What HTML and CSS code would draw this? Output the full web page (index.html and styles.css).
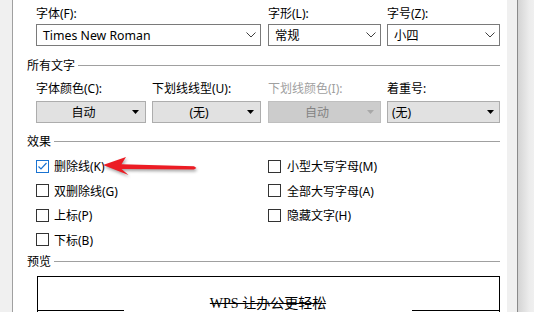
FILE: index.html
```html
<!DOCTYPE html>
<html lang="zh-CN">
<head>
<meta charset="utf-8">
<title>字体</title>
<link rel="stylesheet" href="styles.css">
</head>
<body>
<div class="frame">
  <div class="edge-left"></div>
  <main class="panel">
    <div class="row row-fields">
      <div class="field f225 gap7">
        <div class="label">字体(F):</div>
        <div class="select"><span>Times New Roman</span><svg class="chev" width="10" height="6" viewBox="0 0 10 6"><polyline points="0.5,0.5 5,5 9.5,0.5" fill="none" stroke="#404040" stroke-width="1"/></svg></div>
      </div>
      <div class="field f113 gap6">
        <div class="label">字形(L):</div>
        <div class="select"><span>常规</span><svg class="chev" width="10" height="6" viewBox="0 0 10 6"><polyline points="0.5,0.5 5,5 9.5,0.5" fill="none" stroke="#404040" stroke-width="1"/></svg></div>
      </div>
      <div class="field f113">
        <div class="label">字号(Z):</div>
        <div class="select"><span>小四</span><svg class="chev" width="10" height="6" viewBox="0 0 10 6"><polyline points="0.5,0.5 5,5 9.5,0.5" fill="none" stroke="#404040" stroke-width="1"/></svg></div>
      </div>
    </div>

    <div class="section sec-all"><span>所有文字</span><i class="rule"></i></div>

    <div class="row row-buttons">
      <div class="field f110 gap6">
        <div class="label">字体颜色(C):</div>
        <div class="dd center"><span class="dd-text">自动</span><svg class="tri" width="7" height="4" viewBox="0 0 7 4"><polygon points="0,0 7,0 3.5,4" fill="#000"/></svg></div>
      </div>
      <div class="field f109 gap7">
        <div class="label">下划线线型(U):</div>
        <div class="dd center"><span class="dd-text">(无)</span><svg class="tri" width="7" height="4" viewBox="0 0 7 4"><polygon points="0,0 7,0 3.5,4" fill="#000"/></svg></div>
      </div>
      <div class="field f113 gap6">
        <div class="label disabled">下划线颜色(I):</div>
        <div class="dd center off"><span class="dd-text">自动</span><svg class="tri" width="7" height="4" viewBox="0 0 7 4"><polygon points="0,0 7,0 3.5,4" fill="#a8a8a8"/></svg></div>
      </div>
      <div class="field f113">
        <div class="label">着重号:</div>
        <div class="dd left"><span class="dd-text">(无)</span><svg class="tri" width="7" height="4" viewBox="0 0 7 4"><polygon points="0,0 7,0 3.5,4" fill="#000"/></svg></div>
      </div>
    </div>

    <div class="section sec-effect"><span>效果</span><i class="rule"></i></div>

    <div class="checks">
      <label class="check"><span class="box checked"><svg width="11" height="11" viewBox="0 0 11 11"><polyline points="1.5,5.5 4,8 9.5,2" fill="none" stroke="#1a73d1" stroke-width="1.2"/></svg></span><span>删除线(K)</span></label>
      <label class="check"><span class="box"></span><span>双删除线(G)</span></label>
      <label class="check"><span class="box"></span><span>上标(P)</span></label>
      <label class="check"><span class="box"></span><span>下标(B)</span></label>
      <label class="check right"><span class="box"></span><span>小型大写字母(M)</span></label>
      <label class="check right"><span class="box"></span><span>全部大写字母(A)</span></label>
      <label class="check right"><span class="box"></span><span>隐藏文字(H)</span></label>
    </div>

    <div class="section sec-preview"><span>预览</span><i class="rule"></i></div>

    <div class="preview">
      <div class="baseline">
        <i class="bl-left"></i>
        <div class="sample"><span class="strike">WPS 让办公更轻松</span></div>
        <i class="bl-right"></i>
      </div>
    </div>
  </main>
  <div class="edge-right"></div>
  <div class="edge-line"></div>
  <div class="shadow"></div>

  <svg class="arrow" width="100" height="26" viewBox="0 0 100 26">
    <polygon points="3,11 26,3 21.5,10.2 94,12.3 96.4,13.9 94,15.6 21.5,15 28.5,21" fill="#ec1c24"/>
  </svg>
</div>
</body>
</html>
```

FILE: styles.css
```css
* { box-sizing: border-box; }

html, body {
  margin: 0;
  padding: 0;
  width: 534px;
  height: 312px;
  overflow: hidden;
  background: #f0f0f0;
  font-family: "Noto Sans", "Noto Sans CJK SC", sans-serif;
  font-size: 12px;
  color: #000;
}

.frame {
  position: relative;
  display: flex;
  width: 534px;
  height: 312px;
}

.edge-left {
  width: 13px;
  flex: 0 0 13px;
  background: #f0f0f0;
  border-right: 1px solid #a0a0a0;
}

.panel {
  flex: 0 0 494px;
  width: 494px;
  height: 312px;
  background: #fff;
  padding: 0 7px 0 14px;
  overflow: hidden;
}

.edge-right {
  flex: 0 0 10px;
  background: #f0f0f0;
}

.edge-line {
  flex: 0 0 1px;
  background: #8a8a8a;
}

.shadow {
  flex: 1 1 auto;
  background: linear-gradient(to right, #d4d4d4, #ececec 70%, #f0f0f0);
}

/* rows of fields */
.row {
  display: flex;
  margin-left: 9px;
}

.row-fields { margin-top: 6px; }
.row-buttons { margin-top: 7px; }

.field { display: flex; flex-direction: column; }
.f225 { width: 225px; }
.f113 { width: 113px; }
.f110 { width: 110px; }
.f109 { width: 109px; }
.gap6 { margin-right: 6px; }
.gap7 { margin-right: 7px; }

.label {
  height: 16px;
  line-height: 16px;
  white-space: nowrap;
}
.label.disabled { color: #a0a0a0; }

.select {
  margin-top: 2px;
  height: 22px;
  border: 1px solid #7a7a7a;
  background: #fff;
  display: flex;
  align-items: center;
  padding: 0 4px 0 6px;
  font-size: 12.3px;
}
.select span { flex: 1 1 auto; white-space: nowrap; }
.chev { flex: 0 0 auto; display: block; }

.dd {
  margin-top: 4px;
  height: 22px;
  border: 1px solid #adadad;
  background: #e1e1e1;
  display: flex;
  align-items: center;
  padding: 0 6px 0 4px;
}
.dd-text { flex: 1 1 auto; white-space: nowrap; }
.dd.center .dd-text { text-align: center; padding-right: 6px; }
.dd.left { padding-right: 5px; }
.dd.off {
  background: #cccccc;
  border-color: #bfbfbf;
  color: #838383;
}
.tri { flex: 0 0 auto; display: block; }

/* section headers */
.section {
  display: flex;
  align-items: center;
  height: 16px;
  line-height: 16px;
}
.section span { white-space: nowrap; }
.rule {
  flex: 1 1 auto;
  height: 1px;
  background: #a0a0a0;
  margin-left: 3px;
  margin-top: -1px;
}
.sec-all { margin-top: 12px; }
.sec-effect { margin-top: 11px; }
.sec-preview { margin-top: 2px; }

/* checkboxes */
.checks {
  margin-left: 9px;
  margin-top: 4px;
  display: grid;
  grid-template-columns: 232px 1fr;
  grid-template-rows: repeat(4, 24.5px);
  grid-auto-flow: column;
}

.check {
  display: flex;
  align-items: center;
  white-space: nowrap;
}

.box {
  flex: 0 0 13px;
  width: 13px;
  height: 13px;
  border: 1px solid #333;
  background: #fff;
  margin-right: 5px;
  display: flex;
  align-items: center;
  justify-content: center;
}
.check.right .box { margin-right: 6px; }
.box.checked { border-color: #1a73d1; }
.box svg { display: block; }

/* preview */
.preview {
  margin-top: 6px;
  margin-left: 10px;
  width: 463px;
  height: 60px;
  border: 1px solid #000;
  border-bottom: none;
  padding-top: 20px;
}

.baseline {
  display: flex;
  align-items: flex-end;
  height: 14px;
}
.bl-left, .bl-right {
  height: 1px;
  background: #000;
}
.bl-left { flex: 0 0 86px; }
.bl-right { flex: 1 1 auto; }

.sample {
  flex: 0 0 288px;
  text-align: center;
  font-family: "Liberation Serif", "Noto Sans CJK SC", serif;
  font-size: 14px;
  line-height: 14px;
  white-space: nowrap;
}
.strike { text-decoration: line-through; }

/* annotation arrow */
.arrow {
  position: absolute;
  left: 100px;
  top: 154px;
  filter: drop-shadow(1px 2px 1.5px rgba(0, 0, 0, 0.35));
}
```
